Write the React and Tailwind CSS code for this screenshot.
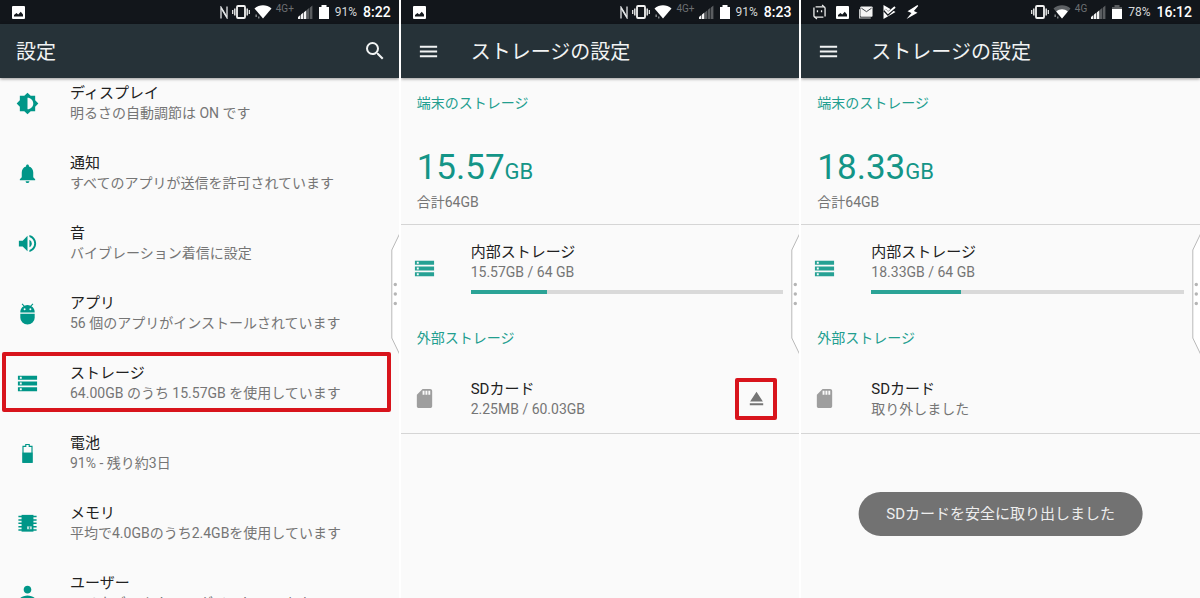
import React from 'react'
import {
  MdBrightnessMedium,
  MdEject,
  MdMenu,
  MdNotifications,
  MdPerson,
  MdSdCard,
  MdSearch,
  MdStorage,
  MdVolumeUp,
} from 'react-icons/md'

/* ---------- Status bar icons ---------- */

const PictureIcon = () => (
  <svg viewBox="0 0 13 13" className="w-[13px] h-[13px]">
    <rect width="13" height="13" rx="1" fill="#fff" />
    <path d="M2 10.5V9l2.5-2 1.7 1.4L8.8 5.8 11 8.6v1.9z" fill="#14181d" />
  </svg>
)

const NfcIcon = () => (
  <svg viewBox="0 0 8 13" className="w-2 h-[13px]" fill="none" stroke="#e3e5e6">
    <path d="M1 12.5V1.2L6.2 9.8" strokeWidth="1.3" />
    <path d="M7 .5v11.3L1.8 3.2" strokeWidth="1.3" />
  </svg>
)

const VibrateIcon = () => (
  <svg viewBox="0 0 18 14" className="w-[18px] h-3.5" fill="none" stroke="#f2f2f2">
    <rect x="5" y="1" width="8" height="12" rx="1" strokeWidth="1.8" />
    <path d="M2.8 3.5v7M15.2 3.5v7" strokeWidth="1.4" />
    <path d="M.7 5v4M17.3 5v4" strokeWidth="1.2" />
  </svg>
)

const WifiIcon = ({ weak }) => (
  <svg viewBox="0 0 18 14" className="w-[18px] h-3.5">
    <path d="M.5 3.4C5.4-.8 12.6-.8 17.5 3.4L9 13.5z" fill={weak ? '#5d6165' : '#fff'} />
    {weak && <path d="M3.2 6.4c3.4-2.8 8.2-2.8 11.6 0L9 13.5z" fill="#fff" />}
    <path d="M1.4 9.5h1.6v2.500H1.400zM4 11.500h1.500v2H4z" fill="#7d8184" />
  </svg>
)

const SignalIcon = ({ lit }) => (
  <svg viewBox="0 0 15 14" className="w-[15px] h-3.5">
    {[0, 1, 2, 3, 4].map((i) => (
      <path
        key={i}
        d={`M${i * 3} 14v-${2 + i * 2.4}l2.400-2v${4 + i * 2.4}z`}
        fill={i < lit ? '#f4f4f4' : '#5a5d60'}
      />
    ))}
  </svg>
)

const BatteryIcon = ({ low }) => (
  <svg viewBox="0 0 10 14" className="w-2.5 h-3.5">
    <path d="M0 2h2.5V0h5v2H10v12H0z" fill={low ? '#5a5d60' : '#fff'} />
    {low && <path d="M0 4h10v10H0z" fill="#fff" />}
  </svg>
)

const CaptureIcon = () => (
  <svg viewBox="0 0 14 16" className="w-[13px] h-4" fill="none" stroke="#eee" strokeWidth="1.4">
    <path d="M2.800 2.500h8.700q1.500 0 1.500 1.500v8.800M11.200 13.500H2.500Q1 13.500 1 12V3.200" />
    <path d="M9.800.5l2.200 2M4.200 15.500L2 13.500" />
    <path d="M4.800 6v2.200M9.200 6v2.200" />
  </svg>
)

const MailStackIcon = () => (
  <svg viewBox="0 0 15 13" className="w-3.5 h-[13px]">
    <path d="M.6 3v9.400h12" stroke="#c5c7c8" strokeWidth="1.200" fill="none" />
    <rect x="1.500" width="13" height="11" rx="1" fill="#f4f4f4" />
    <path d="M2.500 1.800L8 5.600l5.500-3.800" stroke="#33383c" strokeWidth="1" fill="none" />
  </svg>
)

const PlayCheckIcon = () => (
  <svg viewBox="0 0 13 14" className="w-[13px] h-3.5">
    <path d="M.5 0L12.500 7 .5 14z" fill="#fff" />
    <path d="M1.500 5l3.500 3.600L12.500 2" stroke="#14181d" strokeWidth="3.400" fill="none" />
    <path d="M2 4.700l3 3.300 7-6" stroke="#fff" strokeWidth="1.900" fill="none" />
  </svg>
)

const BoltIcon = () => (
  <svg viewBox="0 0 13 14" className="w-[13px] h-3.5">
    <path d="M11.500 0L1.500 6.200l4 1.800L.5 14l11-6.200-3.600-1.700L12.200 1z" fill="#fff" />
  </svg>
)

/* ---------- List icons ---------- */

const AndroidIcon = () => (
  <svg viewBox="0 0 24 24" width="23" height="23" fill="currentColor">
    <path d="M4.5 12.2v4.3a7.5 7 0 0 0 15 0v-4.3z" />
    <path d="M16.1 4.4l2-2.100-.8-.8-2.300 2.300A7 7 0 0 0 12 3.100c-1.100 0-2.100.3-3 .7L6.700 1.500l-.8.8 2 2.100A7.200 7.200 0 0 0 4.500 10.400v.6h15v-.6a7.200 7.200 0 0 0-3.400-6zM9 8.500a1 1 0 1 1 0-2 1 1 0 0 1 0 2zm6 0a1 1 0 1 1 0-2 1 1 0 0 1 0 2z" />
  </svg>
)

const BatteryLevelIcon = () => (
  <svg viewBox="0 0 24 24" width="23" height="23">
    <path d="M7.3 4.500h2.900V2.600h3.600v1.900h2.900V21H7.300z" fill="none" stroke="currentColor" strokeWidth="1.200" />
    <path d="M6.700 11h10.600v10.800H6.700z" fill="currentColor" />
  </svg>
)

const MemoryIcon = () => (
  <svg viewBox="0 0 24 24" width="23" height="23" fill="currentColor">
    <path d="M5.800 3h12.400v17.500H5.800z" />
    <path d="M2.500 4h19v1.600h-19zM2.500 7.500h19v1.600h-19zM2.500 11h19v1.600h-19zM2.500 14.500h19v1.600h-19zM2.500 18h19v1.600h-19z" />
    <path d="M11.500 15h5v3h-5z" fill="#b7ded9" />
    <path d="M13.600 15h.8v3h-.8z" />
  </svg>
)

const settings = [
  { icon: <MdBrightnessMedium size={23} />, title: 'ディスプレイ', note: '明るさの自動調節は ON です' },
  { icon: <MdNotifications size={23} />, title: '通知', note: 'すべてのアプリが送信を許可されています' },
  { icon: <MdVolumeUp size={23} />, title: '音', note: 'バイブレーション着信に設定' },
  { icon: <AndroidIcon />, title: 'アプリ', note: '56 個のアプリがインストールされています' },
  { icon: <MdStorage size={23} />, title: 'ストレージ', note: '64.00GB のうち 15.57GB を使用しています', marked: true },
  { icon: <BatteryLevelIcon />, title: '電池', note: '91% - 残り約3日' },
  { icon: <MemoryIcon />, title: 'メモリ', note: '平均で4.0GBのうち2.4GBを使用しています' },
  { icon: <MdPerson size={23} />, title: 'ユーザー', note: 'ハリネズミ としてログインしています' },
]

const StatusBar = ({ left, network, weak, lit, low, nfc, percent, time }) => (
  <div className="h-6 bg-[#12161b] pl-3 pr-2 flex items-center justify-between text-white">
    <div className="flex items-center gap-2.5">{left}</div>
    <div className="flex items-center gap-1.5">
      <span className="flex items-center gap-1">
        {nfc && <NfcIcon />}
        <VibrateIcon />
        <WifiIcon weak={weak} />
        <span className="text-[10px] leading-4 pb-1.5 text-[#6d7073]">{network}</span>
        <SignalIcon lit={lit} />
      </span>
      <span className="flex items-center gap-1.5">
        <BatteryIcon low={low} />
        <span className="text-xs text-[#d6d8d9]">{percent}</span>
      </span>
      <span className="text-sm leading-5 font-medium">{time}</span>
    </div>
  </div>
)

const AppBar = ({ children }) => (
  <header className="relative z-10 h-[54px] bg-[#263238] text-[#f1f3f3] pl-4 pr-3 flex items-center shadow-[0_1px_3px_rgba(0,0,0,0.4)]">
    {children}
  </header>
)

// Pull tab of the edge panel, laid over the right side of the screen
const EdgeHandle = () => (
  <svg viewBox="0 0 8 120" className="absolute right-0 top-[234px] w-2 h-[120px]">
    <path d="M8.5 0L.8 16v88l7.700 16" fill="#fff" stroke="#b9b9b9" />
    <circle cx="4.300" cy="50.500" r="1.700" fill="#b5b5b5" />
    <circle cx="4.300" cy="60" r="1.700" fill="#b5b5b5" />
    <circle cx="4.300" cy="69.500" r="1.700" fill="#b5b5b5" />
  </svg>
)

const Screen = ({ children }) => (
  <section className="relative flex-1 min-w-0 overflow-hidden bg-[#fafafa]">
    {children}
    <EdgeHandle />
  </section>
)

const ItemText = ({ title, note }) => (
  <span className="block whitespace-nowrap">
    <span className="block text-[15px] leading-5 text-[#212121]">{title}</span>
    <span className="block text-[14px] leading-5 text-[#757575]">{note}</span>
  </span>
)

const SettingsScreen = () => (
  <Screen>
    <StatusBar left={<PictureIcon />} nfc network="4G+" lit={3} percent="91%" time="8:22" />
    <AppBar>
      <h1 className="flex-1 pt-0.5 text-[20px] leading-6">設定</h1>
      <button aria-label="検索">
        <MdSearch size={24} />
      </button>
    </AppBar>
    <ul className="flex flex-col gap-5">
      {settings.map((item) => (
        <li key={item.title} className="relative">
          <a href="#" className="h-[50px] px-4 flex items-center text-[#009688]">
            <span className="w-[54px] shrink-0">{item.icon}</span>
            <ItemText title={item.title} note={item.note} />
          </a>
          {item.marked && (
            <span className="absolute -top-1.5 -bottom-1 left-0.5 right-2 border-4 border-[#d8141c] rounded-xs pointer-events-none" />
          )}
        </li>
      ))}
    </ul>
  </Screen>
)

const StorageScreen = ({ status, used, sdNote, mounted, toast }) => (
  <Screen>
    {status}
    <AppBar>
      <button aria-label="メニュー" className="w-[54px]">
        <MdMenu size={23} />
      </button>
      <h1 className="pt-0.5 text-[20px] leading-6">ストレージの設定</h1>
    </AppBar>

    <div className="px-4 pt-[15px] h-[147px] border-b border-[#d5d5d5]">
      <h2 className="text-[14px] leading-5 text-[#229e8f]">端末のストレージ</h2>
      <p className="mt-[37px] leading-9 text-[#139587]">
        <span className="text-[35px]">{used}</span>
        <span className="text-[22px]">GB</span>
      </p>
      <p className="text-[14px] leading-5 text-[#757575]">合計64GB</p>
    </div>

    <a href="#" className="block pt-[17px] pl-3 pr-4">
      <span className="flex items-center text-[#26a194]">
        <span className="w-[58px] pt-3 shrink-0">
          <MdStorage size={23} />
        </span>
        <ItemText title="内部ストレージ" note={`${used}GB / 64 GB`} />
      </span>
      <span
        role="progressbar"
        aria-label="使用量"
        aria-valuenow={Math.round((used / 64) * 100)}
        className="block ml-[58px] mt-2 h-1 bg-[#d9d9d9]"
      >
        <span className="block h-full bg-[#2ba396]" style={{ width: `${(used / 64) * 100}%` }} />
      </span>
    </a>

    <h2 className="px-4 mt-[34px] text-[14px] leading-5 text-[#229e8f]">外部ストレージ</h2>

    <div className="mt-[18px] h-[68px] pl-3 pr-[22px] pb-0.5 flex items-center border-b border-[#d5d5d5]">
      <span className="w-[58px] shrink-0 text-[#9e9e9e]">
        <MdSdCard size={23} />
      </span>
      <span className="flex-1">
        <ItemText title="SDカード" note={sdNote} />
      </span>
      {mounted && (
        <button
          aria-label="取り外し"
          className="size-[42px] border-4 border-[#d8141c] rounded-xs text-[#757575] flex items-center justify-center"
        >
          <MdEject size={23} />
        </button>
      )}
    </div>

    {toast && (
      <div
        role="status"
        className="absolute bottom-[62px] left-1/2 -translate-x-1/2 rounded-full bg-[#727272] text-[#eeeeee] px-7 py-3 text-[15px] leading-5 whitespace-nowrap"
      >
        {toast}
      </div>
    )}
  </Screen>
)

const App = () => {
  return (
    <main className="h-screen flex gap-0.5 overflow-hidden bg-white font-['Roboto','Noto_Sans_CJK_JP',sans-serif]">
      <SettingsScreen />
      <StorageScreen
        used="15.57"
        sdNote="2.25MB / 60.03GB"
        mounted
        status={
          <StatusBar left={<PictureIcon />} nfc network="4G+" lit={2} percent="91%" time="8:23" />
        }
      />
      <StorageScreen
        used="18.33"
        sdNote="取り外しました"
        toast="SDカードを安全に取り出しました"
        status={
          <StatusBar
            left={
              <>
                <CaptureIcon />
                <PictureIcon />
                <MailStackIcon />
                <PlayCheckIcon />
                <BoltIcon />
              </>
            }
            network="4G"
            weak
            low
            lit={3}
            percent="78%"
            time="16:12"
          />
        }
      />
    </main>
  )
}

export default App
